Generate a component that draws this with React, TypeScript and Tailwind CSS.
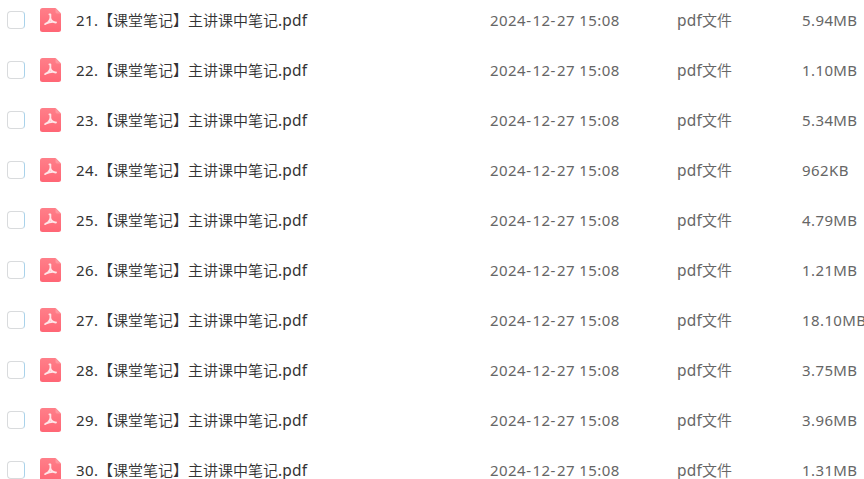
const sizes = ['5.94MB', '1.10MB', '5.34MB', '962KB', '4.79MB', '1.21MB', '18.10MB', '3.75MB', '3.96MB', '1.31MB'];

function PdfIcon() {
  return (
    <svg className="ml-[15px] h-6 w-[21px] shrink-0" viewBox="0 0 21 24" fill="none">
      <defs>
        <linearGradient id="pdf-red" x1="0" y1="0" x2="0" y2="1">
          <stop offset="0" stopColor="#ff7f89" />
          <stop offset="1" stopColor="#ff6675" />
        </linearGradient>
      </defs>
      <path d="M2.5 0H15.5L21 5.5V21.5Q21 24 18.5 24H2.5Q0 24 0 21.5V2.5Q0 0 2.5 0Z" fill="url(#pdf-red)" />
      <path d="M15.5 0L21 5.5H17Q15.5 5.5 15.5 4Z" fill="#ff959d" />
      <path
        d="M9.4 6.3H10.4C10.7 8.8 10.3 11 9.5 12.5C8.5 14.4 7.2 15.4 5.1 16.1M10.4 10.2C11.1 12.7 12.8 14.2 16 14.5M6.2 15.4C8.6 14.1 11 13.6 14 13.8"
        stroke="#ffe6e8"
        strokeWidth="1.8"
        strokeLinecap="round"
        strokeLinejoin="round"
      />
    </svg>
  );
}

function FileRow({ index, size }: { index: number; size: string }) {
  return (
    <div className="flex h-[50px] shrink-0 items-center whitespace-nowrap pl-[7px] text-[15px] leading-[22px] tracking-[0.4px] text-[#666]">
      <span className="h-[18px] w-[18px] shrink-0 rounded-[4px] border border-[#d9dbdd] border-r-[#a9d2ea] bg-white" />
      <PdfIcon />
      <div className="ml-[15px] flex w-[414px] shrink-0 items-baseline text-[#333]">
        <span className="w-[22px]">{index}.</span>
        <span className="font-[350] tracking-normal">【课堂笔记】主讲课中笔记</span>
        <span className="text-[15.5px] tracking-[0.2px]">.pdf</span>
      </div>
      <div className="w-[187px] shrink-0 tracking-[0.45px]">
        2024<span className="tracking-[1.5px]">-</span>12<span className="tracking-[1.5px]">-</span>27 15:08
      </div>
      <div className="flex w-[125px] shrink-0 items-baseline">
        <span className="text-[15.5px] tracking-[0.2px]">pdf</span>
        <span className="font-[350] tracking-normal">文件</span>
      </div>
      <div className="shrink-0">{size}</div>
    </div>
  );
}

export default function App() {
  return (
    <div className="flex h-[479px] w-[864px] flex-col overflow-hidden bg-white font-['Noto_Sans','Noto_Sans_CJK_SC',sans-serif]">
      <div className="-mt-[5px]">
        {sizes.map((size, i) => (
          <FileRow key={i} index={21 + i} size={size} />
        ))}
      </div>
    </div>
  );
}
